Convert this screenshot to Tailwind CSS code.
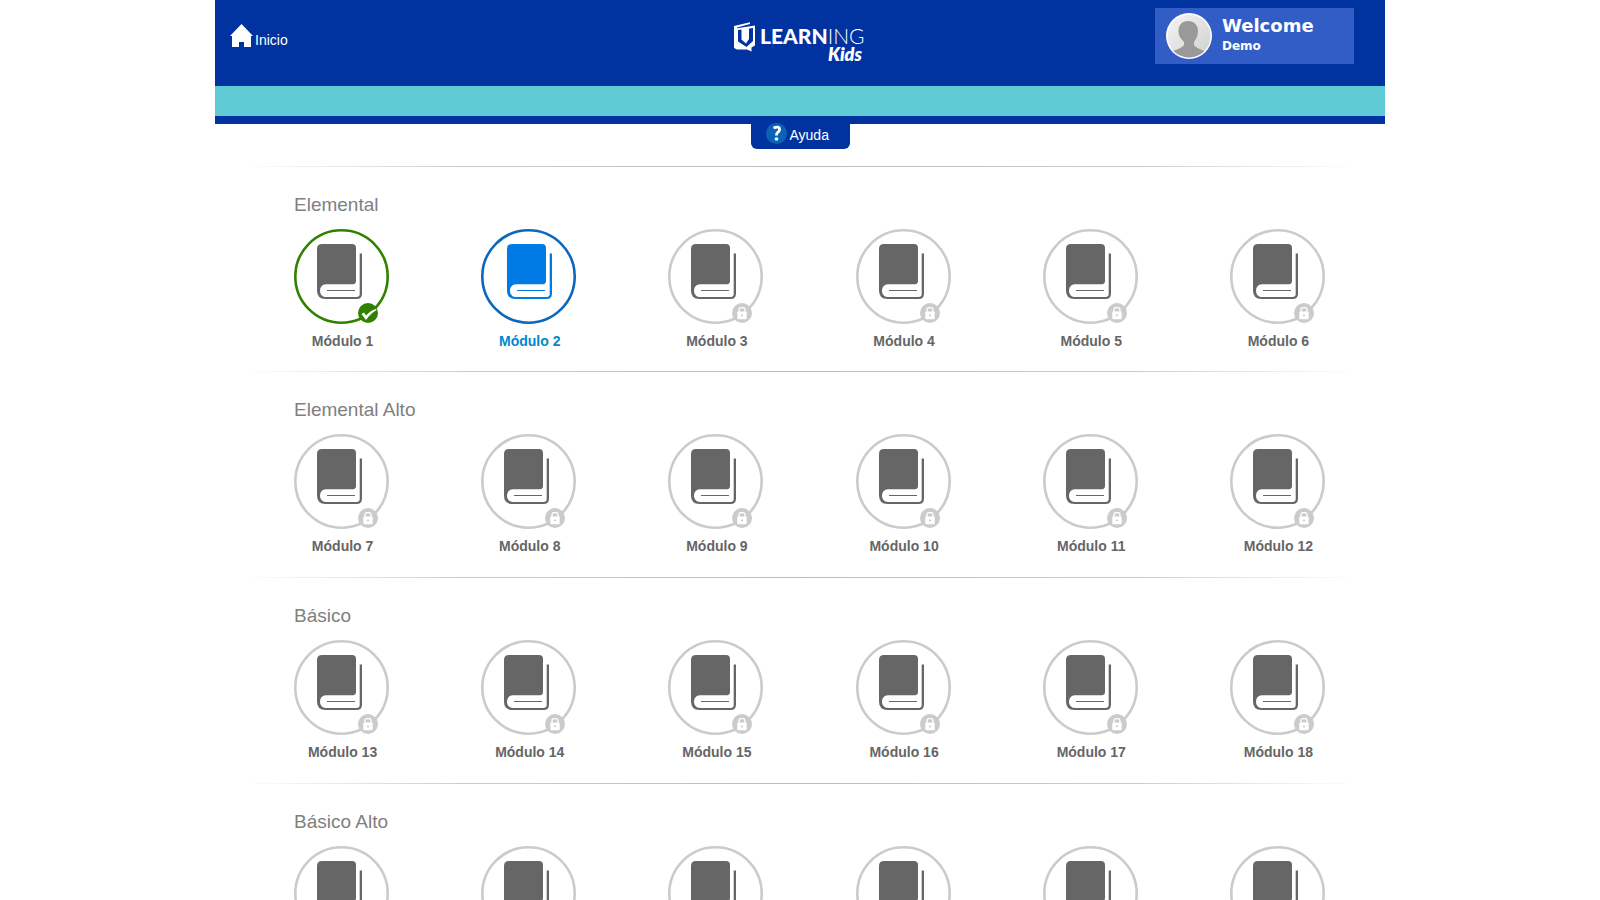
<!DOCTYPE html>
<html lang="es">
<head>
<meta charset="utf-8">
<meta name="viewport" content="width=device-width, initial-scale=1">
<title>V Learning Kids</title>
<script src="https://cdn.jsdelivr.net/npm/@tailwindcss/browser@4"></script>
</head>
<body class="bg-white font-['Liberation_Sans',Arial,sans-serif] text-sm">
<svg class="hidden" aria-hidden="true">
  <symbol id="book" viewBox="0 0 45 55">
    <path fill="currentColor" d="M5 0H35Q39 0 39 4V37Q39 40 36 40.300H9C1 40.300 1 53 9 53H39.500Q42.700 53 42.700 50V9.500H45V49.500Q45 55 39.500 55H8.500Q0 55 0 46.500V5Q0 0 5 0Z"/>
    <path stroke="currentColor" d="M10 46.500H38"/>
  </symbol>
  <symbol id="lock" viewBox="0 0 20 20">
    <circle cx="10" cy="10" r="10" fill="#cbcbcb"/>
    <path d="M7 9V7Q7 4.700 9 4.700H11Q13 4.700 13 7V9" fill="none" stroke="#fff" stroke-width="1.300"/>
    <rect x="5.300" y="8.500" width="9.400" height="7.700" rx="1" fill="#fff"/>
    <circle cx="10" cy="12.300" r="0.900" fill="#bbb"/>
  </symbol>
  <symbol id="check" viewBox="0 0 20 20">
    <circle cx="10" cy="10" r="10" fill="#308100"/>
    <path d="M3.500 11L6 9.500L8.300 12.500Q12 7.500 18 6L18.500 7Q12.500 10.500 8 17Z" fill="#fff"/>
  </symbol>
</svg>

<div class="mx-auto max-w-[1170px]">
  <header class="bg-[#0033a0] text-white">
    <div class="grid h-[86px] grid-cols-3 items-start">
      <a href="#inicio" class="ml-[15px] mt-6 flex h-6 w-fit items-end gap-0.5">
        <svg class="mb-px size-[23px]" viewBox="0 0 23 23" aria-hidden="true"><path fill="#fff" d="M11.500 0L23 12H21V23H14V18H9V23H2V12H0Z"/></svg>
        <span class="leading-4">Inicio</span>
      </a>
      <svg class="mt-5 h-11 w-[132px] justify-self-center" viewBox="0 0 132 44" role="img" aria-label="V Learning Kids">
        <path fill="#fff" d="M0 6L16 2.300V4L3 7.500V8.300L21 5.500V25.500L17.500 27.500V31.500L13 29.500L3 29.500L0 28Z"/>
        <path fill="#0033a0" d="M4 10L19 8V21L12.500 27L4 21.500Z"/>
        <path fill="#fff" d="M7.500 9L15 8V19L12 23.500L7.500 19.500Z"/>
        <g fill="#fff" font-family="Lato, sans-serif">
          <text x="26" y="24" font-size="21" font-weight="900">LEARN<tspan font-weight="300">ING</tspan></text>
          <text x="94" y="41" font-size="18" font-weight="800" font-style="italic">Kids</text>
        </g>
      </svg>
      <div class="mr-[31px] mt-2 flex h-14 w-[199px] items-start justify-self-end bg-[#325dc7] pl-[11px] pt-[5px] font-['DejaVu_Sans',sans-serif] font-bold">
        <svg class="size-[46px]" viewBox="0 0 46 46" role="img" aria-label="Foto de perfil">
          <defs>
            <linearGradient id="photo" x1="0" y1="0" x2="1" y2="1"><stop stop-color="#f5f5f5"/><stop offset="1" stop-color="#cfcfcf"/></linearGradient>
            <clipPath id="round"><circle cx="23" cy="23" r="21.500"/></clipPath>
          </defs>
          <circle cx="23" cy="23" r="23" fill="#fff"/>
          <circle cx="23" cy="23" r="21.500" fill="url(#photo)"/>
          <path clip-path="url(#round)" fill="#999" d="M22 8C28 8 32 12 32 18C32 23 30 26 28 29V32Q30 35 38 38V46H7V38Q16 35 18 32V29C15 26 12.500 23 12.500 18C12.500 12 16 8 22 8Z"/>
        </svg>
        <div class="ml-[10px] pt-px">
          <p class="text-lg leading-6">Welcome</p>
          <p class="text-xs leading-4">Demo</p>
        </div>
      </div>
    </div>
    <div class="h-[30px] bg-[#5ecad4]"></div>
    <div class="h-2"></div>
  </header>

  <a href="#ayuda" class="mx-auto flex h-[25px] w-[99px] items-start gap-[3px] rounded-b-md bg-[#0033a0] pl-[15px] text-white">
    <svg class="-mt-px size-[21px]" viewBox="0 0 21 21" aria-hidden="true"><circle cx="10.500" cy="10.500" r="10.500" fill="#0b63b8"/><path d="M7.500 5Q14 2.500 13.500 7Q13.300 8.500 11.500 9.700Q10.500 10.500 10.500 12.500" fill="none" stroke="#fff" stroke-width="2.800"/><circle cx="10.500" cy="16" r="1.800" fill="#fff"/></svg>
    <span class="leading-[22px]">Ayuda</span>
  </a>

  <main id="levels" class="pt-[17px]"></main>
</div>

<script>
  const levels = ['Elemental', 'Elemental Alto', 'Básico', 'Básico Alto'];
  const styles = {
    done: { ring: '#308100', book: 'text-[#666666]', x: 23, label: 'text-[#666666]', badge: '#check' },
    active: { ring: '#0c68bd', book: 'text-[#007be5]', x: 26, label: 'text-[#0088cc]', badge: null },
    locked: { ring: '#cbcbcb', book: 'text-[#666666]', x: 23, label: 'text-[#666666]', badge: '#lock' }
  };
  function moduleItem(n) {
    const s = styles[n === 1 ? 'done' : n === 2 ? 'active' : 'locked'];
    return `<li><a href="#modulo-${n}" class="flex flex-col items-center">
      <svg class="h-[95px] w-[95px] ${s.book}" viewBox="0 0 95 95" aria-hidden="true">
        <circle cx="47.500" cy="47.500" r="46.200" fill="none" stroke="${s.ring}" stroke-width="2.600"/>
        <use href="#book" x="${s.x}" y="15" width="45" height="55"/>
        ${s.badge ? `<use href="${s.badge}" x="64" y="74" width="20" height="20"/>` : ''}
      </svg>
      <span class="mt-[7px] pl-0.5 font-bold leading-5 ${s.label}">Módulo ${n}</span>
    </a></li>`;
  }
  document.getElementById('levels').innerHTML = levels.map((name, i) => `
    <section class="h-[206px] first:h-[205px]">
      <div class="mx-[26px] h-px bg-[linear-gradient(to_right,transparent,#cccccc_20%,#bcbcbc_50%,#cccccc_80%,transparent)]"></div>
      <h2 class="ml-[79px] pt-[25px] text-[19px] leading-[26px] text-[#808080]">${name}</h2>
      <ul class="grid grid-cols-6 pl-[33px] pr-[14px] pt-[11px]">${[1, 2, 3, 4, 5, 6].map(k => moduleItem(i * 6 + k)).join('')}</ul>
    </section>`).join('');
</script>
</body>
</html>
